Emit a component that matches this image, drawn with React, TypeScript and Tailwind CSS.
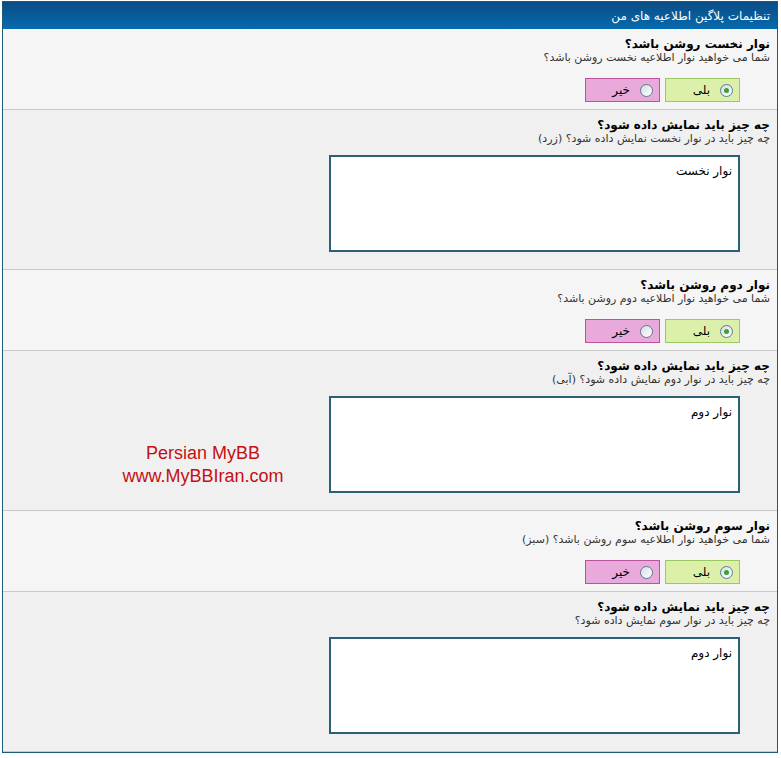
import React from 'react';

const fa = { fontFamily: '"DejaVu Sans", Tahoma, sans-serif' };

type Setting =
    | { kind: 'yesno'; title: string; desc: string; on: boolean }
    | { kind: 'text'; title: string; desc: string; value: string };

const SETTINGS: Setting[] = [
    { kind: 'yesno', title: 'نوار نخست روشن باشد؟', desc: 'شما می خواهید نوار اطلاعیه نخست روشن باشد؟', on: true },
    { kind: 'text', title: 'چه چیز باید نمایش داده شود؟', desc: 'چه چیز باید در نوار نخست نمایش داده شود؟ (زرد)', value: 'نوار نخست' },
    { kind: 'yesno', title: 'نوار دوم روشن باشد؟', desc: 'شما می خواهید نوار اطلاعیه دوم روشن باشد؟', on: true },
    { kind: 'text', title: 'چه چیز باید نمایش داده شود؟', desc: 'چه چیز باید در نوار دوم نمایش داده شود؟ (آبی)', value: 'نوار دوم' },
    { kind: 'yesno', title: 'نوار سوم روشن باشد؟', desc: 'شما می خواهید نوار اطلاعیه سوم روشن باشد؟ (سبز)', on: true },
    { kind: 'text', title: 'چه چیز باید نمایش داده شود؟', desc: 'چه چیز باید در نوار سوم نمایش داده شود؟', value: 'نوار دوم' },
];

function Radio({ checked }: { checked: boolean }) {
    return (
        <span className="w-[13px] h-[13px] rounded-full border border-[#5a7a94] bg-gradient-to-br from-[#d8dde2] to-white flex items-center justify-center">
            {checked && <span className="w-[5px] h-[5px] rounded-full bg-[#3aa03a]" />}
        </span>
    );
}

function YesNo({ on }: { on: boolean }) {
    return (
        <div className="flex gap-[5px] mt-[14px] mr-[30px]">
            <label className="w-[75px] h-[24px] flex items-center gap-[10px] pr-[6px] bg-[#dcf0a9] border border-[#9cc765] text-[12px] text-black">
                <Radio checked={on} />
                <span>بلی</span>
            </label>
            <label className="w-[75px] h-[24px] flex items-center gap-[10px] pr-[6px] bg-[#e9a9da] border border-[#b8559c] text-[12px] text-black">
                <Radio checked={!on} />
                <span>خیر</span>
            </label>
        </div>
    );
}

function Row({ s, index }: { s: Setting; index: number }) {
    const bg = index % 2 === 0 ? 'bg-[#f5f5f5]' : 'bg-[#f0f0f0]';
    return (
        <div className={`relative ${bg} border-b border-[#c9c9c9] pt-[8px] pr-[7px] ${s.kind === 'text' ? 'pb-[17px]' : 'pb-[7px]'}`}>
            <div className="text-[12px] leading-[14px] font-bold text-black">{s.title}</div>
            <div className="text-[11px] leading-[13px] text-[#333]">{s.desc}</div>
            {s.kind === 'yesno' ? (
                <YesNo on={s.on} />
            ) : (
                <div className="mt-[10px] mr-[30px] w-[411px] h-[97px] bg-white border-2 border-[#2b6079] px-[6px] pt-[7px] text-[12px] leading-[14px] text-black">
                    {s.value}
                </div>
            )}
            {index === 3 && (
                <div
                    className="absolute left-[110px] top-[91px] w-[180px] text-center text-[18px] leading-[23px] text-[#c41010]"
                    style={{ fontFamily: '"Liberation Sans", Arial, sans-serif' }}
                    dir="ltr"
                >
                    <div>Persian MyBB</div>
                    <div>www.MyBBIran.com</div>
                </div>
            )}
        </div>
    );
}

export default function App() {
    return (
        <div className="w-[781px] h-[758px] bg-white pt-[1px] pl-[2px]" style={fa}>
            <div className="w-[776px] border border-[#1d5a78]" dir="rtl">
                <div className="h-[27px] bg-gradient-to-b from-[#0a4c85] to-[#066aae] flex items-center pr-[7px] text-white text-[12px]">
                    تنظیمات پلاگین اطلاعیه های من
                </div>
                {SETTINGS.map((s, i) => (
                    <Row key={i} s={s} index={i} />
                ))}
            </div>
        </div>
    );
}
